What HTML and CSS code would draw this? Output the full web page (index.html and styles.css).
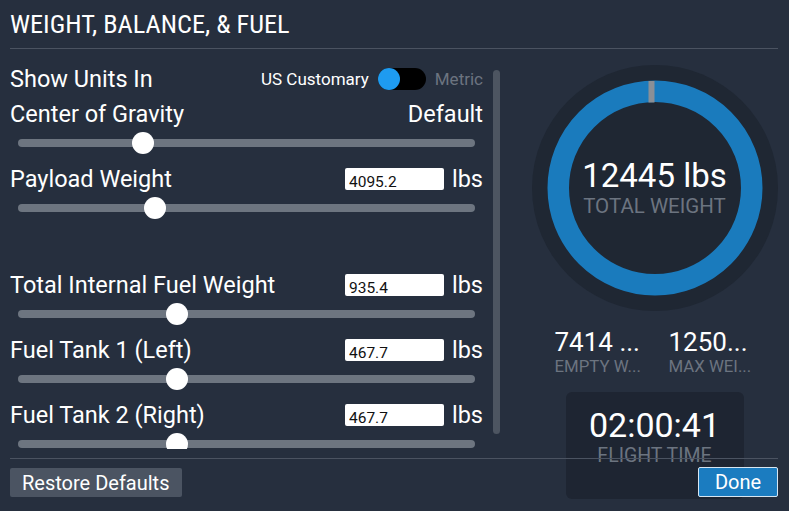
FILE: index.html
```html
<!DOCTYPE html>
<html lang="en">
<head>
    <meta charset="UTF-8">
    <meta name="viewport" content="width=device-width, initial-scale=1.0">
    <title>Weight, Balance, &amp; Fuel</title>
    <link rel="stylesheet" href="styles.css">
</head>
<body>
    <div class="dialog">
        <h1 class="title">WEIGHT, BALANCE, &amp; FUEL</h1>
        <div class="main">
            <div class="settings">
                <div class="settings-list">
                    <div class="row row-units">
                        <span class="label">Show Units In</span>
                        <div class="unit-toggle">
                            <span class="unit-on">US Customary</span>
                            <span class="switch"><span class="knob"></span></span>
                            <span class="unit-off">Metric</span>
                        </div>
                    </div>
                    <div class="row">
                        <span class="label">Center of Gravity</span>
                        <span class="value">Default</span>
                    </div>
                    <div class="slider"><span class="thumb" style="left: calc(27.35% - 11px)"></span></div>

                    <div class="row">
                        <span class="label">Payload Weight</span>
                        <span class="field"><input class="num" type="text" value="4095.2"><span class="unit">lbs</span></span>
                    </div>
                    <div class="slider"><span class="thumb" style="left: calc(29.98% - 11px)"></span></div>

                    <div class="row row-spaced">
                        <span class="label">Total Internal Fuel Weight</span>
                        <span class="field"><input class="num" type="text" value="935.4"><span class="unit">lbs</span></span>
                    </div>
                    <div class="slider"><span class="thumb" style="left: calc(34.79% - 11px)"></span></div>

                    <div class="row">
                        <span class="label">Fuel Tank 1 (Left)</span>
                        <span class="field"><input class="num" type="text" value="467.7"><span class="unit">lbs</span></span>
                    </div>
                    <div class="slider"><span class="thumb" style="left: calc(34.79% - 11px)"></span></div>

                    <div class="row">
                        <span class="label">Fuel Tank 2 (Right)</span>
                        <span class="field"><input class="num" type="text" value="467.7"><span class="unit">lbs</span></span>
                    </div>
                    <div class="slider"><span class="thumb" style="left: calc(34.79% - 11px)"></span></div>
                </div>
                <div class="scrollbar"></div>
            </div>

            <div class="summary">
                <div class="donut">
                    <svg width="246" height="246" viewBox="0 0 246 246">
                        <circle cx="123" cy="123" r="123" fill="#1f2733"/>
                        <circle cx="123" cy="123" r="96.75" fill="none" stroke="#1a7bbd" stroke-width="21.5"/>
                        <rect x="116.5" y="16" width="6" height="21.5" fill="#8a8f96"/>
                    </svg>
                    <div class="donut-text">
                        <div class="total">12445 lbs</div>
                        <div class="caption">TOTAL WEIGHT</div>
                    </div>
                </div>
                <div class="stats">
                    <div class="stat">
                        <div class="stat-num">7414 ...</div>
                        <div class="stat-label">EMPTY W...</div>
                    </div>
                    <div class="stat">
                        <div class="stat-num">1250...</div>
                        <div class="stat-label">MAX WEI...</div>
                    </div>
                </div>
                <div class="flight">
                    <div class="flight-time">02:00:41</div>
                    <div class="caption">FLIGHT TIME</div>
                </div>
            </div>

            <div class="footer">
                <button class="btn-restore">Restore Defaults</button>
                <button class="btn-done">Done</button>
            </div>
        </div>
    </div>
</body>
</html>
```

FILE: styles.css
```css
body {
    margin: 0;
    background-color: #262f3e;
    color: #fff;
    font-family: Roboto, "Liberation Sans", sans-serif;
}
.dialog {
    width: 789px;
    height: 511px;
    padding: 0 11px 0 10px;
    box-sizing: border-box;
    overflow: hidden;
}
.title {
    margin: 0;
    padding: 9px 0;
    font-size: 26.3px;
    line-height: 30px;
    font-weight: 400;
    font-stretch: condensed;
    border-bottom: 1px solid #4b5361;
}
.main {
    display: grid;
    grid-template-columns: 521px 1fr;
    grid-template-rows: 409px 53px;
}
.settings {
    display: flex;
    grid-row: 1;
    grid-column: 1;
}
.settings-list {
    width: 473px;
    height: 400px;
    overflow: hidden;
    padding-top: 17px;
    box-sizing: border-box;
}
.scrollbar {
    width: 7px;
    height: 364px;
    margin: 21px 0 0 10px;
    border-radius: 4px;
    background-color: #4d5561;
}
.row {
    display: flex;
    justify-content: space-between;
    align-items: center;
    height: 26px;
    font-size: 23.5px;
    line-height: 26px;
}
.row-units {
    margin-bottom: 9px;
}
.row-spaced {
    margin-top: 60px;
}
.unit-toggle {
    display: flex;
    align-items: center;
    gap: 9px;
    font-size: 17px;
}
.unit-off {
    color: #6c7480;
}
.switch {
    display: block;
    width: 48px;
    height: 22px;
    border-radius: 11px;
    background-color: #000;
}
.knob {
    display: block;
    width: 22px;
    height: 22px;
    border-radius: 50%;
    background-color: #1e9bf0;
}
.field {
    display: flex;
    align-items: center;
    gap: 8px;
}
.num {
    width: 99px;
    height: 22px;
    box-sizing: border-box;
    margin: 0;
    padding: 6px 0 0 4px;
    border: none;
    border-radius: 2px;
    background: #fff;
    color: #111;
    font-family: Roboto, "Liberation Sans", sans-serif;
    font-size: 15.5px;
}
.slider {
    position: relative;
    height: 8px;
    margin: 12px 8px 19px;
    border-radius: 4px;
    background-color: #6d7580;
}
.thumb {
    position: absolute;
    top: -7px;
    width: 22px;
    height: 22px;
    border-radius: 50%;
    background-color: #fff;
}
.summary {
    grid-row: 1 / 3;
    grid-column: 2;
    display: flex;
    flex-direction: column;
    align-items: center;
    padding-top: 16px;
}
.donut {
    display: grid;
    width: 246px;
    height: 246px;
}
.donut svg,
.donut-text {
    grid-area: 1 / 1;
}
.donut-text {
    align-self: center;
    text-align: center;
    padding-bottom: 1px;
}
.total {
    font-size: 33px;
    line-height: 36px;
}
.caption {
    color: #6c7480;
    font-size: 20.5px;
    line-height: 24px;
}
.stats {
    display: flex;
    gap: 28px;
    margin-top: 16px;
}
.stat {
    width: 86px;
}
.stat-num,
.stat-label {
    white-space: nowrap;
}
.stat-num {
    font-size: 26px;
    line-height: 30px;
}
.stat-label {
    color: #6c7480;
    font-size: 16.8px;
    line-height: 19px;
}
.flight {
    width: 178px;
    height: 107px;
    margin-top: 16px;
    padding-top: 13px;
    box-sizing: border-box;
    border-radius: 6px;
    background-color: #1e2532;
    text-align: center;
}
.flight-time {
    font-size: 34px;
    line-height: 40px;
}
.flight .caption {
    font-size: 19.5px;
    line-height: 22px;
}
.footer {
    grid-row: 2;
    grid-column: 1 / 3;
    display: flex;
    justify-content: space-between;
    align-items: flex-start;
    padding-top: 9px;
    border-top: 1px solid #4b5361;
}
.btn-restore {
    height: 29px;
    padding: 0 13px 0 12px;
    border: none;
    border-radius: 2px;
    background-color: #4b5462;
    color: #fff;
    font-family: Roboto, "Liberation Sans", sans-serif;
    font-size: 20px;
}
.btn-done {
    width: 80px;
    height: 30px;
    margin-top: -1px;
    border: 1px solid #d7e6f2;
    border-radius: 2px;
    background-color: #1b7cc0;
    color: #fff;
    font-family: Roboto, "Liberation Sans", sans-serif;
    font-size: 20px;
}
```
